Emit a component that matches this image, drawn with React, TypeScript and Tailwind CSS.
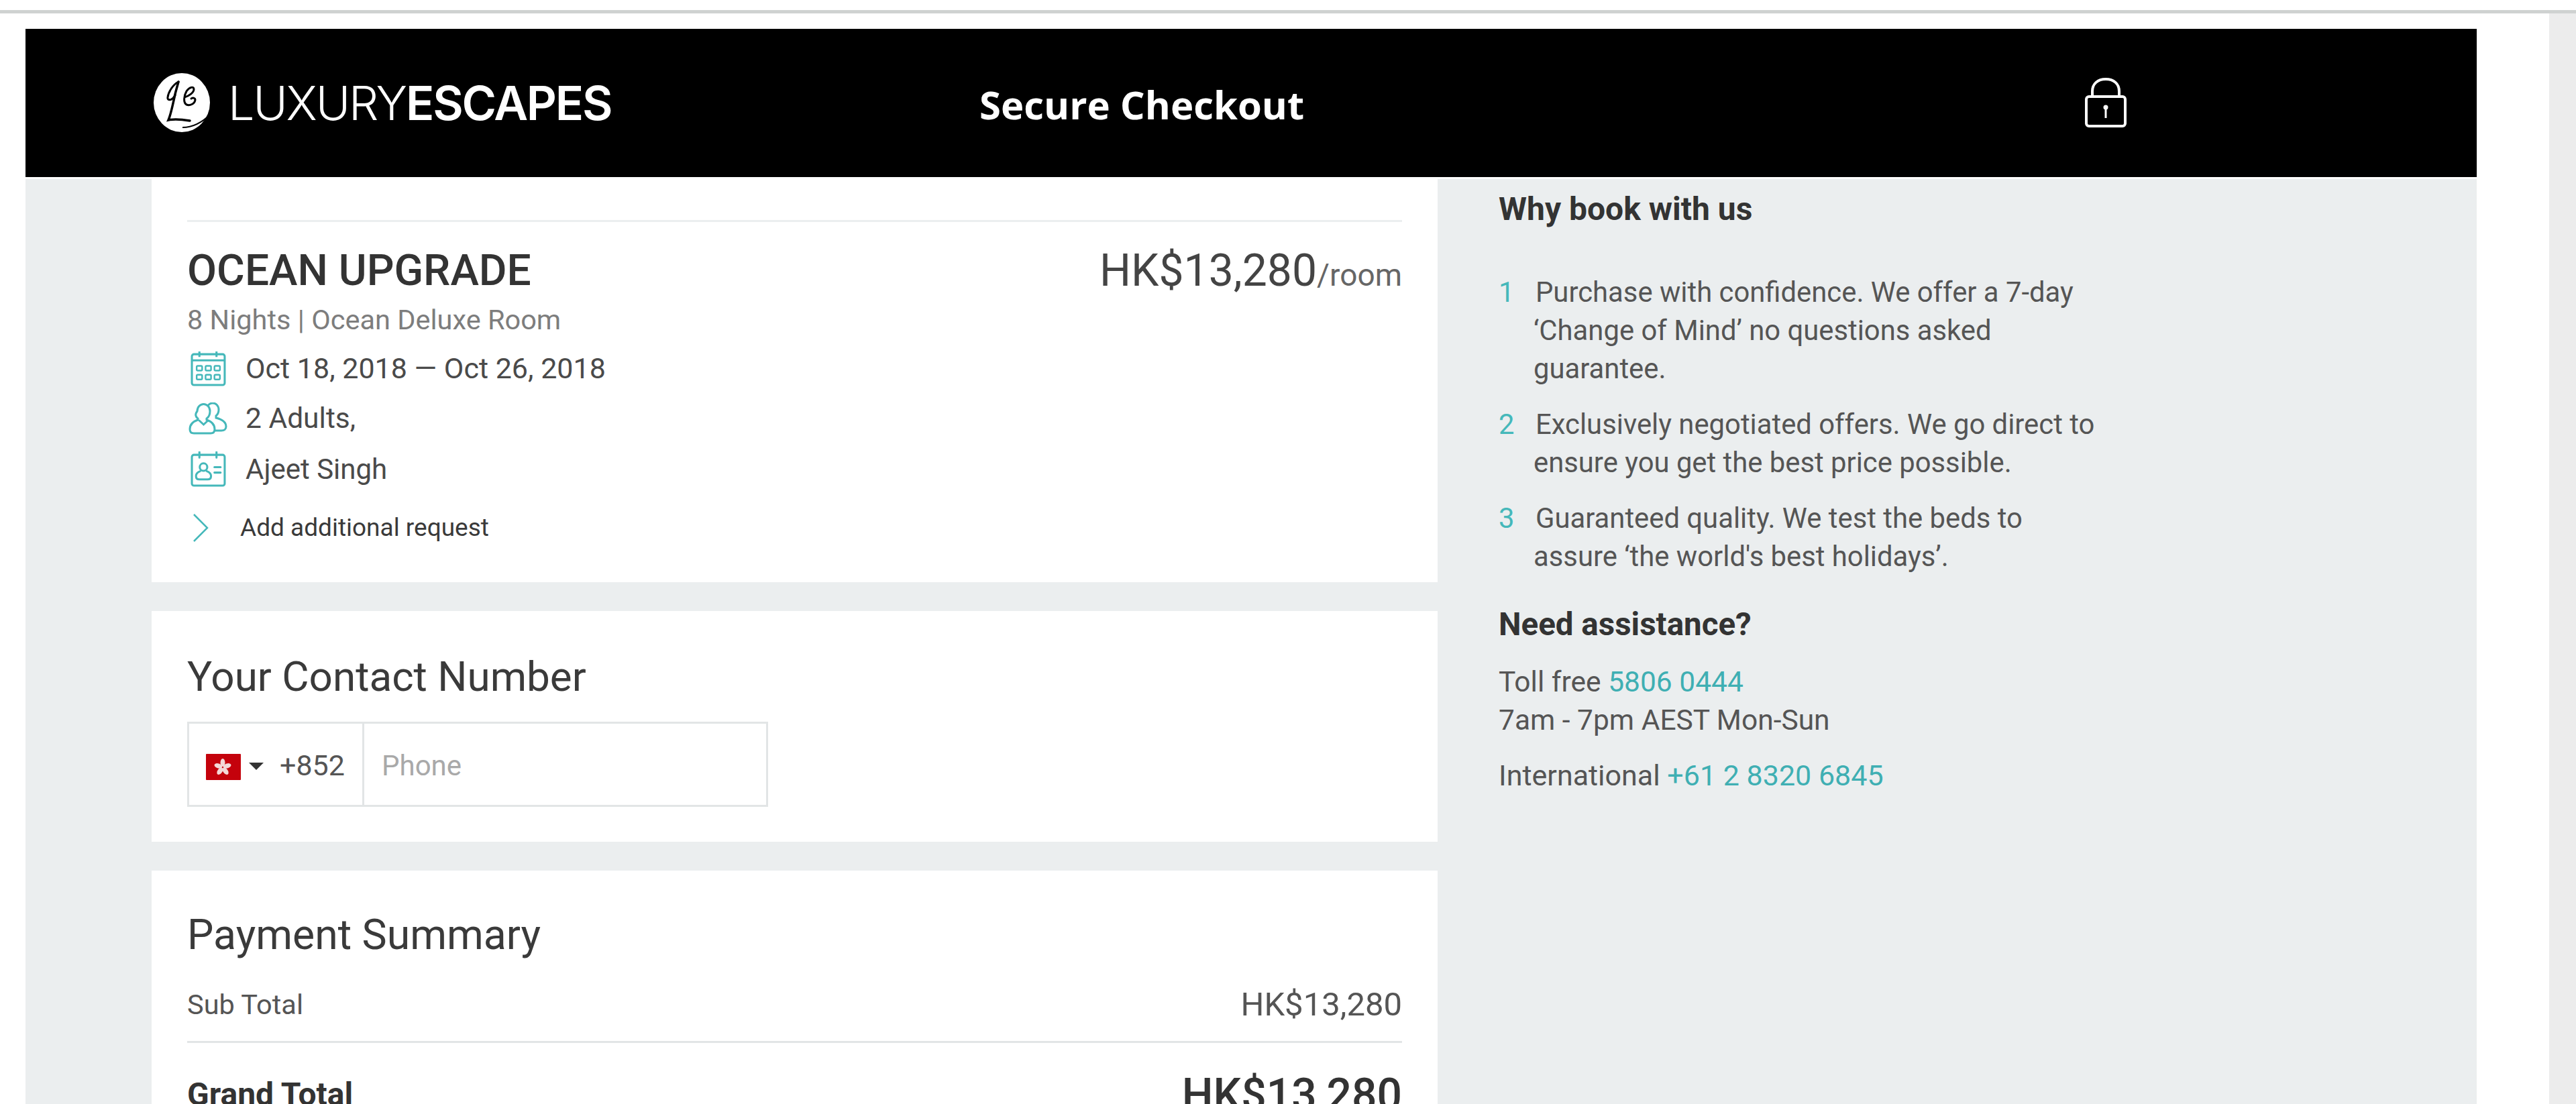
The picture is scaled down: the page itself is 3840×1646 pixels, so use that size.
import React from "react";

const font = "font-['Roboto','Noto_Sans',sans-serif]";

const CalendarIcon = () => (
  <svg viewBox="0 0 52 52" className="w-[53px] h-[53px] shrink-0" fill="none" stroke="#45b8ba" strokeWidth="3">
    <rect x="2" y="5" width="48" height="45" rx="3" />
    <path d="M2 14h48M13 1v8M38 1v8" />
    <rect x="9" y="22" width="8" height="7" rx="1.5" strokeWidth="2.4" />
    <rect x="22" y="22" width="8" height="7" rx="1.5" strokeWidth="2.4" />
    <rect x="35" y="22" width="8" height="7" rx="1.5" strokeWidth="2.4" />
    <rect x="9" y="35" width="8" height="7" rx="1.5" strokeWidth="2.4" />
    <rect x="22" y="35" width="8" height="7" rx="1.5" strokeWidth="2.4" />
    <rect x="35" y="35" width="8" height="7" rx="1.5" strokeWidth="2.4" />
  </svg>
);

const PeopleIcon = () => (
  <svg viewBox="0 0 58 48" className="w-[58px] h-[48px] shrink-0" fill="none" stroke="#45b8ba" strokeWidth="3" strokeLinecap="round">
    <path d="M13 13a9.5 10.5 0 1 1 19 0c0 5-2 9-5 11v2c6 2 12 6 12 14 0 4-2 6-6 6H8c-4 0-6-2-6-6 0-8 6-12 12-14v-2c-3-2-5-6-1-11z" />
    <path d="M16 27l6.500 6 6.500-6" />
    <path d="M30 3.500c2-2 4-2.500 6-2.500 5 0 9 4 9 10 0 4-1.500 7-4 9v3c8 2 15 6 15 13 0 4-3 6-7 6h-9" />
  </svg>
);

const ContactIcon = () => (
  <svg viewBox="0 0 52 52" className="w-[53px] h-[53px] shrink-0" fill="none" stroke="#45b8ba" strokeWidth="3" strokeLinecap="round">
    <rect x="2" y="5" width="48" height="45" rx="3" />
    <path d="M13 1v8M38 1v8" />
    <circle cx="19" cy="23" r="5.500" />
    <path d="M14 29c-4 1.500-6 4-6 7 0 3 1.500 5 5 5h12c3.500 0 5-2 5-5 0-3-2-5.500-6-7" />
    <path d="M35 23h9M35 31h9" />
  </svg>
);

const Logo = () => (
  <svg viewBox="0 0 88 92" className="w-[88px] h-[92px] shrink-0">
    <ellipse cx="43" cy="45" rx="42" ry="44" fill="#fff" />
    <path d="M38 14c-3 10-6 22-8 32-2 9-4 18-7 25 9-2 20-1 32 1" fill="none" stroke="#000" strokeWidth="3.500" strokeLinecap="round" />
    <path d="M38 14c-8 4-15 15-16 23-1 5 6 6 11-3" fill="none" stroke="#000" strokeWidth="3" strokeLinecap="round" />
    <path d="M47 37c7-2 14-7 14-12 0-5-7-3-11 3-4 7-5 17 0 20 5 2 12-1 13-7 0-3-4-4-6-2" fill="none" stroke="#000" strokeWidth="3" strokeLinecap="round" />
    <path d="M44 82c14 0 28-6 42-20" fill="none" stroke="#000" strokeWidth="2" />
  </svg>
);

const LockIcon = () => (
  <svg viewBox="0 0 64 75" className="w-[64px] h-[75px]" fill="none" stroke="#fff" strokeWidth="4">
    <path d="M12 28V20C12 9 20 2 32 2s20 7 20 18v8" />
    <rect x="3" y="28" width="58" height="44" rx="4" />
    <circle cx="32" cy="44" r="3.500" fill="#fff" stroke="none" />
    <path d="M32 46v14" strokeWidth="3" />
  </svg>
);

const HongKongFlag = () => (
  <svg viewBox="0 0 52 39" className="w-[52px] h-[39px] mt-[8px]">
    <rect width="52" height="39" rx="1" fill="#c4020c" />
    <g fill="#f4d8d8">
      <ellipse cx="25" cy="13" rx="3.500" ry="6" />
      <ellipse cx="25" cy="13" rx="3.500" ry="6" transform="rotate(72 25 20)" />
      <ellipse cx="25" cy="13" rx="3.500" ry="6" transform="rotate(144 25 20)" />
      <ellipse cx="25" cy="13" rx="3.500" ry="6" transform="rotate(216 25 20)" />
      <ellipse cx="25" cy="13" rx="3.500" ry="6" transform="rotate(288 25 20)" />
    </g>
  </svg>
);

const reasons = [
  { n: "1", lines: ["Purchase with confidence. We offer a 7-day", "‘Change of Mind’ no questions asked", "guarantee."] },
  { n: "2", lines: ["Exclusively negotiated offers. We go direct to", "ensure you get the best price possible."] },
  { n: "3", lines: ["Guaranteed quality. We test the beds to", "assure ‘the world's best holidays’."] },
];

export default function App() {
  return (
    <div className={`${font} h-[1646px] w-[3840px] overflow-hidden bg-white flex flex-col`}>
      <div className="h-[15px]" />
      <div className="h-[5px] bg-[#cfd2d1]" />
      <div className="flex flex-1 min-h-0">
        <div className="flex-1 pl-[38px] pt-[23px] flex flex-col min-w-0">
          <div className="w-[3654px] flex flex-col h-full">
            <header className="h-[221px] bg-black flex items-center shrink-0 text-white">
              <div className="ml-[190px] w-[1232px] flex items-center">
                <Logo />
                <span className="ml-[24px] font-['Inter'] text-[70px] leading-none tracking-[-2.2px] whitespace-nowrap">
                  <span className="font-light">LUXURY</span>
                  <span className="font-semibold">ESCAPES</span>
                </span>
              </div>
              <h1 className="font-['Open_Sans'] font-bold text-[58px] leading-none w-[1647px] whitespace-nowrap pt-[4px]">Secure Checkout</h1>
              <LockIcon />
            </header>
            <div className="h-[3px] shrink-0" />
            <main className="flex-1 min-h-0 bg-[#ebeeef] pl-[188px] flex overflow-hidden">
              <div className="w-[1917px] shrink-0 flex flex-col gap-[43px]">
                <section className="bg-white h-[601px] px-[53px] shrink-0">
                  <div className="h-[64px] border-b-[3px] border-[#ebeeef]" />
                  <div className="flex justify-between items-start mt-[38px]">
                    <h2 className="text-[64px] leading-[70px] font-medium text-[#333]">OCEAN UPGRADE</h2>
                    <div className="text-[66px] leading-[70px] text-[#444] whitespace-nowrap">
                      HK$13,280<span className="text-[46px] text-[#666]">/room</span>
                    </div>
                  </div>
                  <p className="text-[41.5px] leading-[50px] text-[#7d7d7d] mt-[7px]">8 Nights | Ocean Deluxe Room</p>
                  <div className="flex items-center mt-[16px] h-[62px] text-[43px] text-[#4a4a4a]">
                    <span className="ml-[5px] w-[82px] shrink-0"><CalendarIcon /></span>
                    Oct 18, 2018 — Oct 26, 2018
                  </div>
                  <div className="flex items-center mt-[13px] h-[62px] text-[42.5px] text-[#4a4a4a]">
                    <span className="ml-[2px] w-[85px] shrink-0"><PeopleIcon /></span>
                    2 Adults,
                  </div>
                  <div className="flex items-center mt-[13px] h-[62px] text-[42px] text-[#4a4a4a]">
                    <span className="ml-[5px] w-[82px] shrink-0"><ContactIcon /></span>
                    Ajeet Singh
                  </div>
                  <div className="flex items-center mt-[32px] h-[50px] text-[37px] text-[#3a3a3a]">
                    <svg viewBox="0 0 24 42" className="ml-[8px] w-[24px] h-[42px] shrink-0" fill="none" stroke="#45b8ba" strokeWidth="2.500">
                      <path d="M2 1l20 20L2 41" />
                    </svg>
                    <span className="ml-[47px]">Add additional request</span>
                  </div>
                </section>
                <section className="bg-white h-[344px] px-[53px] pt-[63px] shrink-0">
                  <h2 className="text-[62px] leading-[70px] text-[#3a3a3a]">Your Contact Number</h2>
                  <div className="mt-[32px] w-[866px] h-[127px] border-[3px] border-[#e2e5e6] flex items-center">
                    <div className="w-[261px] h-full border-r-[3px] border-[#e2e5e6] flex items-center pl-[25px] shrink-0">
                      <HongKongFlag />
                      <span className="ml-[12px] mt-[6px] w-0 h-0 border-x-[11px] border-x-transparent border-t-[11px] border-t-[#333]" />
                      <span className="ml-[24px] text-[43px] text-[#555] pt-[4px]">+852</span>
                    </div>
                    <span className="ml-[26px] text-[42px] text-[#a9a9a9] pt-[4px]">Phone</span>
                  </div>
                </section>
                <section className="bg-white px-[53px] pt-[61px] flex-1">
                  <h2 className="text-[62.5px] leading-[70px] text-[#3a3a3a]">Payment Summary</h2>
                  <div className="flex justify-between items-center mt-[39px] h-[60px] text-[#555]">
                    <span className="text-[41.5px]">Sub Total</span>
                    <span className="text-[49px]">HK$13,280</span>
                  </div>
                  <div className="h-[3px] bg-[#e2e5e6] mt-[24px]" />
                  <div className="flex justify-between items-center mt-[37px] h-[80px] text-[#333]">
                    <span className="text-[48px] font-bold">Grand Total</span>
                    <span className="text-[66px] font-medium">HK$13,280</span>
                  </div>
                </section>
              </div>
              <aside className="ml-[91px] w-[1000px] shrink-0 pt-[15px] text-[41.8px] text-[#555]">
                <h3 className="text-[48px] leading-[60px] font-bold text-[#333]">Why book with us</h3>
                <div className="mt-[65px] flex flex-col gap-[26px]">
                  {reasons.map((r) => (
                    <div key={r.n} className="flex leading-[57px]">
                      <span className="w-[52px] shrink-0 text-[#45b8ba]">{r.n}</span>
                      <p className="indent-[3px] whitespace-nowrap">
                        {r.lines.map((line, i) => (
                          <React.Fragment key={i}>
                            {i > 0 && <br />}
                            {line}
                          </React.Fragment>
                        ))}
                      </p>
                    </div>
                  ))}
                </div>
                <h3 className="text-[47.5px] leading-[60px] font-bold text-[#333] mt-[43px]">Need assistance?</h3>
                <p className="leading-[57px] mt-[27px] text-[42.5px]">
                  Toll free <span className="text-[#3fafb3]">5806 0444</span>
                  <br />
                  7am - 7pm AEST Mon-Sun
                </p>
                <p className="leading-[57px] mt-[26px] text-[43px]">
                  International <span className="text-[#3fafb3]">+61 2 8320 6845</span>
                </p>
              </aside>
            </main>
          </div>
        </div>
        <div className="w-[40px] bg-[#ececec] shrink-0" />
      </div>
    </div>
  );
}
